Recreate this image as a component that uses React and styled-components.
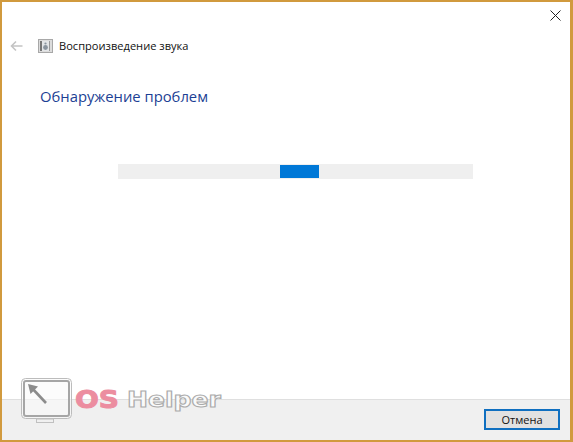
import React from "react";
import styled, { createGlobalStyle } from "styled-components";

const Global = createGlobalStyle`
  html, body { margin: 0; padding: 0; background: #fff; }
  #root { width: 573px; height: 442px; overflow: hidden; }
`;

const Frame = styled.div`
  box-sizing: border-box;
  position: relative;
  width: 573px;
  height: 442px;
  border-style: solid;
  border-color: #d19a3e;
  border-width: 2px 3px 2px 2px;
  background: #fff;
  display: flex;
  flex-direction: column;
  font-family: "Open Sans", "Noto Sans", sans-serif;
`;

const CloseBar = styled.div`
  height: 25px;
  display: flex;
  justify-content: flex-end;
  align-items: flex-start;
  padding: 8px 9px 0 0;
  box-sizing: border-box;
  svg { display: block; }
`;

const Header = styled.div`
  display: flex;
  align-items: center;
  height: 16px;
  margin-top: 11px;
  padding-left: 8px;
`;

const BackIcon = styled.svg`
  width: 13px;
  height: 12px;
  margin-right: 15px;
`;

const AppIcon = styled.svg`
  width: 15px;
  height: 14px;
  margin-right: 6px;
`;

const HeaderTitle = styled.span`
  font-size: 11.1px;
  line-height: 16px;
  color: #111;
  white-space: nowrap;
`;

const Heading = styled.h1`
  margin: 31px 0 0 38px;
  font-size: 14.8px;
  line-height: 22px;
  font-weight: 400;
  color: #1c3f94;
  white-space: nowrap;
`;

const Track = styled.div`
  width: 355px;
  height: 15px;
  margin: 57px 0 0 116px;
  background: #efefef;
  display: flex;
  align-items: center;
  padding-left: 162px;
  box-sizing: border-box;
`;

const Chunk = styled.div`
  width: 39px;
  height: 13px;
  background: #0078d7;
`;

const Spacer = styled.div`
  flex: 1;
`;

const Footer = styled.div`
  height: 41px;
  box-sizing: border-box;
  background: #f0f0f0;
  border-top: 1px solid #dfdfdf;
  display: flex;
  justify-content: flex-end;
  align-items: flex-start;
  padding: 9px 10px 0 0;
`;

const CancelButton = styled.button`
  box-sizing: border-box;
  width: 76px;
  height: 21px;
  padding: 0;
  background: #e1e1e1;
  border: 2px solid #0f6fc0;
  font-family: inherit;
  font-size: 11px;
  line-height: 16px;
  color: #111;
`;

const Watermark = styled.div`
  position: absolute;
  left: 18px;
  top: 375px;
  display: flex;
  align-items: flex-start;
`;

const LogoIcon = styled.svg`
  width: 54px;
  height: 46px;
  margin-right: 1px;
`;

const LogoOs = styled.span`
  font-family: "DejaVu Sans", sans-serif;
  font-weight: 700;
  font-size: 25px;
  line-height: 24px;
  margin-top: 11px;
  color: #ec8da0;
  -webkit-text-stroke: 1px #ec8da0;
  transform: scaleX(1.12);
  transform-origin: left;
  width: 52px;
`;

const LogoHelper = styled.span`
  font-family: "DejaVu Sans", sans-serif;
  font-weight: 700;
  font-size: 22px;
  line-height: 24px;
  margin-top: 11px;
  color: #fafafa;
  -webkit-text-stroke: 1.1px #ababab;
  transform: scaleX(1.14);
  transform-origin: left;
`;

export default function App() {
  return (
    <>
      <Global />
      <Frame>
        <CloseBar>
          <svg width="11" height="11" viewBox="0 0 11 11">
            <path d="M0.5 0.5 L10.5 10.5 M10.5 0.5 L0.5 10.5" stroke="#222" strokeWidth="1" fill="none" />
          </svg>
        </CloseBar>
        <Header>
          <BackIcon viewBox="0 0 13 12">
            <path d="M12.5 6 H1.5 M6 1.5 L1.5 6 L6 10.5" stroke="#c4c4c4" strokeWidth="1.6" fill="none" />
          </BackIcon>
          <AppIcon viewBox="0 0 15 14">
            <rect x="0.5" y="0.5" width="14" height="13" fill="#dcdcdc" stroke="#a8a8a8" />
            <rect x="2" y="2" width="2" height="10" fill="#777" />
            <rect x="4" y="2" width="7" height="10" fill="#e4e6e8" />
            <circle cx="7.5" cy="8.5" r="2.4" fill="#8a949e" />
            <circle cx="7.5" cy="4.5" r="1.1" fill="#8a949e" />
            <rect x="11" y="2" width="1" height="10" fill="#999" />
          </AppIcon>
          <HeaderTitle>Воспроизведение звука</HeaderTitle>
        </Header>
        <Heading>Обнаружение проблем</Heading>
        <Track>
          <Chunk />
        </Track>
        <Spacer />
        <Footer>
          <CancelButton>Отмена</CancelButton>
        </Footer>
        <Watermark>
          <LogoIcon viewBox="0 0 54 46">
            <rect x="1.5" y="1.5" width="50" height="40" rx="4" fill="rgba(250,250,250,0.6)" stroke="#bcbcbc" strokeWidth="1" />
            <rect x="4" y="4" width="45" height="35" rx="2" fill="none" stroke="#a6a6a6" strokeWidth="2" />
            <path d="M10 9 L26 26" stroke="#8c8c8c" strokeWidth="2.6" fill="none" />
            <path d="M8 7 L18 9.5 L10.5 17 Z" fill="#8c8c8c" />
            <rect x="16.5" y="42" width="17" height="3.5" fill="none" stroke="#c0c0c0" strokeWidth="1" />
          </LogoIcon>
          <LogoOs>OS</LogoOs>
          <LogoHelper>Helper</LogoHelper>
        </Watermark>
      </Frame>
    </>
  );
}
